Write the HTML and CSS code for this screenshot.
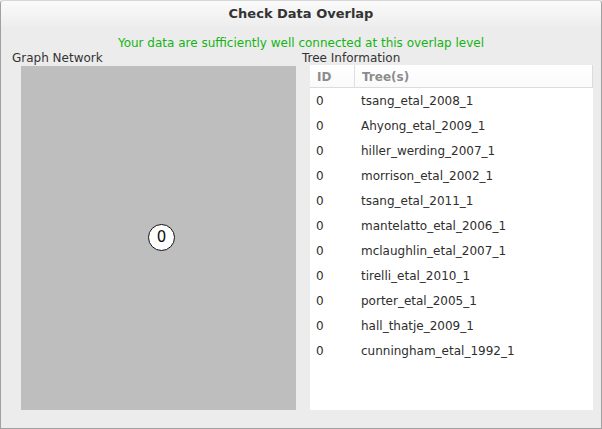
FILE: index.html
```html
<!DOCTYPE html>
<html>
<head>
<meta charset="utf-8">
<link rel="stylesheet" href="styles.css">
</head>
<body>
<div class="window">
  <div class="titlebar">Check Data Overlap</div>
  <div class="message">Your data are sufficiently well connected at this overlap level</div>
  <div class="panels">
    <div class="col col-left">
      <div class="label">Graph Network</div>
      <div class="graph">
        <div class="node">0</div>
      </div>
    </div>
    <div class="col col-right">
      <div class="label">Tree Information</div>
      <div class="table">
        <div class="thead">
          <div class="th th-id">ID</div>
          <div class="th th-tree">Tree(s)</div>
        </div>
        <div class="row"><div class="td-id">0</div><div class="td-tree">tsang_etal_2008_1</div></div>
        <div class="row"><div class="td-id">0</div><div class="td-tree">Ahyong_etal_2009_1</div></div>
        <div class="row"><div class="td-id">0</div><div class="td-tree">hiller_werding_2007_1</div></div>
        <div class="row"><div class="td-id">0</div><div class="td-tree">morrison_etal_2002_1</div></div>
        <div class="row"><div class="td-id">0</div><div class="td-tree">tsang_etal_2011_1</div></div>
        <div class="row"><div class="td-id">0</div><div class="td-tree">mantelatto_etal_2006_1</div></div>
        <div class="row"><div class="td-id">0</div><div class="td-tree">mclaughlin_etal_2007_1</div></div>
        <div class="row"><div class="td-id">0</div><div class="td-tree">tirelli_etal_2010_1</div></div>
        <div class="row"><div class="td-id">0</div><div class="td-tree">porter_etal_2005_1</div></div>
        <div class="row"><div class="td-id">0</div><div class="td-tree">hall_thatje_2009_1</div></div>
        <div class="row"><div class="td-id">0</div><div class="td-tree">cunningham_etal_1992_1</div></div>
      </div>
    </div>
  </div>
</div>
</body>
</html>
```
FILE: styles.css
```css
html, body {
  margin: 0;
  padding: 0;
  background: #ececec;
}
body {
  width: 602px;
  height: 429px;
  font-family: "DejaVu Sans", sans-serif;
  font-size: 12px;
  color: #2e2e2e;
}
.window {
  box-sizing: border-box;
  width: 602px;
  height: 429px;
  border: 1px solid #a0a0a0;
  border-top-color: #d6d6d6;
  border-radius: 4px 4px 0 0;
  background: #ececec;
  display: flex;
  flex-direction: column;
  overflow: hidden;
}
.titlebar {
  height: 26px;
  line-height: 25px;
  text-align: center;
  font-weight: bold;
  font-size: 13px;
  color: #333;
  background: linear-gradient(#fafafa, #ededed);
}
.message {
  margin-top: 9px;
  height: 14px;
  line-height: 14px;
  text-align: center;
  color: #14b414;
}
.panels {
  display: flex;
  gap: 6px;
  padding-left: 11px;
}
.col {
  display: flex;
  flex-direction: column;
}
.col-left {
  width: 284px;
}
.col-right {
  width: 291px;
}
.label {
  height: 15px;
  line-height: 16px;
  color: #333;
}
.graph {
  position: relative;
  margin-top: 1px;
  margin-left: 9px;
  width: 275px;
  height: 344px;
  background: #bebebe;
}
.node {
  position: absolute;
  left: 127px;
  top: 158px;
  box-sizing: border-box;
  width: 27px;
  height: 27px;
  border: 1.5px solid #111;
  border-radius: 50%;
  background: #fff;
  color: #111;
  font-size: 15px;
  line-height: 24px;
  text-align: center;
}
.table {
  margin-left: 8px;
  width: 283px;
  height: 345px;
  background: #fff;
}
.thead {
  display: flex;
  height: 22px;
  border-bottom: 1px solid #dcdcdc;
  border-right: 1px solid #dcdcdc;
  background: linear-gradient(#ffffff, #fafafa);
}
.th {
  line-height: 24px;
  font-weight: bold;
  color: #8c8c8c;
}
.th-id {
  width: 37px;
  padding-left: 7px;
  border-right: 1px solid #e0e0e0;
}
.th-tree {
  padding-left: 7px;
}
.row {
  display: flex;
  height: 25px;
  line-height: 27px;
}
.td-id {
  width: 45px;
  padding-left: 6px;
  box-sizing: border-box;
}
.td-tree {
  padding-left: 6px;
}
```
